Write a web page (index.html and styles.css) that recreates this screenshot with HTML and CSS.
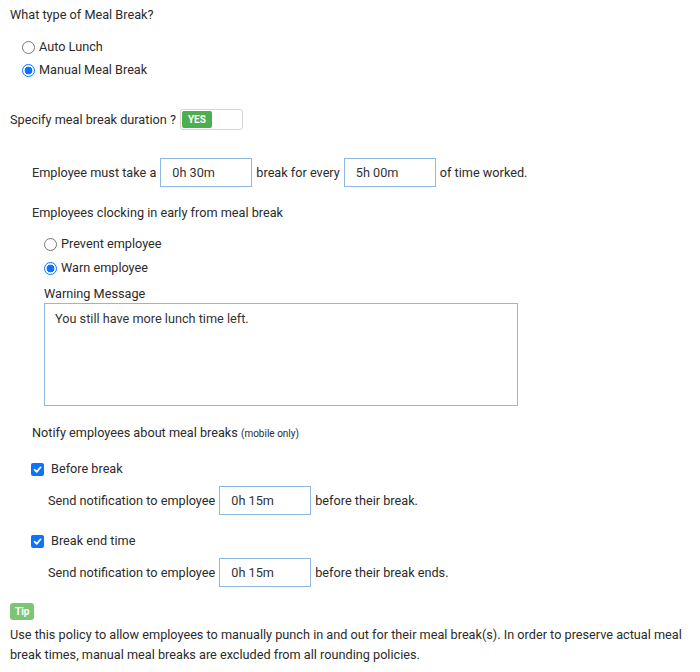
FILE: index.html
```html
<!DOCTYPE html>
<html>
<head>
<meta charset="utf-8">
<link rel="stylesheet" href="styles.css">
</head>
<body>
<div class="page">
  <div class="q-title">What type of Meal Break?</div>
  <div class="radio-group top-radios">
    <label class="radio"><span class="rbox"></span>Auto Lunch</label>
    <label class="radio"><span class="rbox on"></span>Manual Meal Break</label>
  </div>

  <div class="specify">
    <span>Specify meal break duration ?</span>
    <span class="toggle"><span class="toggle-on">YES</span></span>
  </div>

  <div class="section">
    <div class="inline-row first-row">
      <span>Employee must take a</span>
      <span class="field">0h 30m</span>
      <span>break for every</span>
      <span class="field">5h 00m</span>
      <span>of time worked.</span>
    </div>

    <div class="sub-title">Employees clocking in early from meal break</div>
    <div class="indent">
      <div class="radio-group">
        <label class="radio"><span class="rbox"></span>Prevent employee</label>
        <label class="radio"><span class="rbox on"></span>Warn employee</label>
      </div>
      <div class="warn-label">Warning Message</div>
      <div class="textarea">You still have more lunch time left.</div>
    </div>

    <div class="notify-title">Notify employees about meal breaks <small>(mobile only)</small></div>

    <label class="check check-first"><span class="cbox"><svg viewBox="0 0 14 14" width="14" height="14"><path d="M3.2 7.2 L6 10 L11 4.2" fill="none" stroke="#fff" stroke-width="2.2" stroke-linecap="round" stroke-linejoin="round"/></svg></span>Before break</label>
    <div class="inline-row notif">
      <span>Send notification to employee</span>
      <span class="field">0h 15m</span>
      <span>before their break.</span>
    </div>

    <label class="check check-second"><span class="cbox"><svg viewBox="0 0 14 14" width="14" height="14"><path d="M3.2 7.2 L6 10 L11 4.2" fill="none" stroke="#fff" stroke-width="2.2" stroke-linecap="round" stroke-linejoin="round"/></svg></span>Break end time</label>
    <div class="inline-row notif">
      <span>Send notification to employee</span>
      <span class="field">0h 15m</span>
      <span>before their break ends.</span>
    </div>
  </div>

  <div class="tip-badge">Tip</div>
  <p class="tip-text">Use this policy to allow employees to manually punch in and out for their meal break(s). In order to preserve actual meal break times, manual meal breaks are excluded from all rounding policies.</p>
</div>
</body>
</html>
```

FILE: styles.css
```css
* { box-sizing: border-box; }
html, body { margin: 0; padding: 0; background: #fff; }
body {
  font-family: Roboto, "Liberation Sans", sans-serif;
  font-size: 12.7px;
  color: #2b2b2b;
}
.page { padding: 6px 10px 0 10px; }
.q-title { line-height: 18px; }
.radio-group { display: flex; flex-direction: column; gap: 5px; }
.top-radios { margin-top: 14px; padding-left: 12px; }
.radio { display: flex; align-items: center; gap: 4px; line-height: 18px; }
.rbox {
  width: 13px; height: 13px; border-radius: 50%;
  border: 1px solid #767676; background: #fff; display: inline-block;
  flex: none;
}
.rbox.on {
  border: 1px solid #0a74ff;
  background: radial-gradient(circle, #0a74ff 0 3.6px, #fff 4.2px);
}
.specify { display: flex; align-items: center; gap: 4px; margin-top: 30px; }
.toggle {
  display: inline-flex; width: 63px; height: 21px; border: 1px solid #d5d5d5;
  border-radius: 3px; padding: 1px; background: #fff;
}
.toggle-on {
  width: 30px; background: #4cae4c; color: #fff; font-size: 10px; font-weight: 700;
  display: flex; align-items: center; justify-content: center; border-radius: 2px;
}
.section { padding-left: 22px; }
.inline-row { display: flex; align-items: center; gap: 4px; }
.first-row { margin-top: 28px; }
.field {
  width: 92px; height: 29px; border: 1px solid #8fb8e0; padding-left: 11px;
  display: flex; align-items: center; color: #333;
}
.sub-title { margin-top: 17px; line-height: 18px; }
.indent { padding-left: 12px; }
.indent .radio-group { margin-top: 13px; gap: 6px; }
.warn-label { margin-top: 8px; line-height: 18px; }
.textarea {
  width: 474px; height: 103px; border: 1px solid #8fb8e0; margin-top: 0;
  padding: 6px 10px; line-height: 18px; color: #333;
}
.notify-title { margin-top: 18px; line-height: 18px; }
.notify-title small { font-size: 10px; }
.check { display: flex; align-items: center; gap: 7px; margin-left: -1px; line-height: 18px; }
.check-first { margin-top: 17px; }
.cbox {
  width: 13px; height: 13px; background: #0a74ff; border-radius: 2px;
  display: inline-flex; align-items: center; justify-content: center; flex: none;
}
.cbox svg { width: 11px; height: 11px; }
.notif { padding-left: 16px; margin-top: 8px; }
.check-second { margin-top: 17px; }
.tip-badge {
  display: inline-block; margin-top: 16px; background: #7cc576; color: #fff;
  font-size: 10px; font-weight: 700; padding: 1px 5px; border-radius: 3px; line-height: 15px;
}
.tip-text { margin: 5px 0 0 0; line-height: 20px; letter-spacing: 0; }
```
